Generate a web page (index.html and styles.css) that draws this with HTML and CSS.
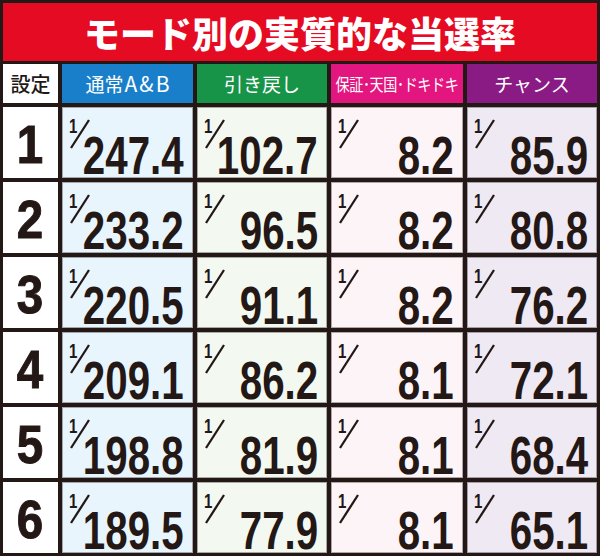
FILE: index.html
```html
<!DOCTYPE html>
<html lang="ja">
<head>
<meta charset="utf-8">
<link rel="stylesheet" href="styles.css">
</head>
<body>
<div class="board">
  <div class="title">モード別の実質的な当選率</div>
  <div class="grid">
    <div class="hd hd-set">設定</div>
    <div class="hd hd-a">通常<span class="wide">A&amp;B</span></div>
    <div class="hd hd-b">引き戻し</div>
    <div class="hd hd-c"><span class="squeeze">保証･天国･ドキドキ</span></div>
    <div class="hd hd-d">チャンス</div>

    <div class="set"><span class="sn">1</span></div>
    <div class="cell ca"><span class="frac"><span class="one">1</span><svg class="slash" viewBox="0 0 22 32"><line x1="2" y1="30" x2="20" y2="2"/></svg></span><span class="num"><span class="nt">247.4</span></span></div>
    <div class="cell cb"><span class="frac"><span class="one">1</span><svg class="slash" viewBox="0 0 22 32"><line x1="2" y1="30" x2="20" y2="2"/></svg></span><span class="num"><span class="nt">102.7</span></span></div>
    <div class="cell cc"><span class="frac"><span class="one">1</span><svg class="slash" viewBox="0 0 22 32"><line x1="2" y1="30" x2="20" y2="2"/></svg></span><span class="num"><span class="nt">8.2</span></span></div>
    <div class="cell cd"><span class="frac"><span class="one">1</span><svg class="slash" viewBox="0 0 22 32"><line x1="2" y1="30" x2="20" y2="2"/></svg></span><span class="num"><span class="nt">85.9</span></span></div>

    <div class="set"><span class="sn">2</span></div>
    <div class="cell ca"><span class="frac"><span class="one">1</span><svg class="slash" viewBox="0 0 22 32"><line x1="2" y1="30" x2="20" y2="2"/></svg></span><span class="num"><span class="nt">233.2</span></span></div>
    <div class="cell cb"><span class="frac"><span class="one">1</span><svg class="slash" viewBox="0 0 22 32"><line x1="2" y1="30" x2="20" y2="2"/></svg></span><span class="num"><span class="nt">96.5</span></span></div>
    <div class="cell cc"><span class="frac"><span class="one">1</span><svg class="slash" viewBox="0 0 22 32"><line x1="2" y1="30" x2="20" y2="2"/></svg></span><span class="num"><span class="nt">8.2</span></span></div>
    <div class="cell cd"><span class="frac"><span class="one">1</span><svg class="slash" viewBox="0 0 22 32"><line x1="2" y1="30" x2="20" y2="2"/></svg></span><span class="num"><span class="nt">80.8</span></span></div>

    <div class="set"><span class="sn">3</span></div>
    <div class="cell ca"><span class="frac"><span class="one">1</span><svg class="slash" viewBox="0 0 22 32"><line x1="2" y1="30" x2="20" y2="2"/></svg></span><span class="num"><span class="nt">220.5</span></span></div>
    <div class="cell cb"><span class="frac"><span class="one">1</span><svg class="slash" viewBox="0 0 22 32"><line x1="2" y1="30" x2="20" y2="2"/></svg></span><span class="num"><span class="nt">91.1</span></span></div>
    <div class="cell cc"><span class="frac"><span class="one">1</span><svg class="slash" viewBox="0 0 22 32"><line x1="2" y1="30" x2="20" y2="2"/></svg></span><span class="num"><span class="nt">8.2</span></span></div>
    <div class="cell cd"><span class="frac"><span class="one">1</span><svg class="slash" viewBox="0 0 22 32"><line x1="2" y1="30" x2="20" y2="2"/></svg></span><span class="num"><span class="nt">76.2</span></span></div>

    <div class="set"><span class="sn">4</span></div>
    <div class="cell ca"><span class="frac"><span class="one">1</span><svg class="slash" viewBox="0 0 22 32"><line x1="2" y1="30" x2="20" y2="2"/></svg></span><span class="num"><span class="nt">209.1</span></span></div>
    <div class="cell cb"><span class="frac"><span class="one">1</span><svg class="slash" viewBox="0 0 22 32"><line x1="2" y1="30" x2="20" y2="2"/></svg></span><span class="num"><span class="nt">86.2</span></span></div>
    <div class="cell cc"><span class="frac"><span class="one">1</span><svg class="slash" viewBox="0 0 22 32"><line x1="2" y1="30" x2="20" y2="2"/></svg></span><span class="num"><span class="nt">8.1</span></span></div>
    <div class="cell cd"><span class="frac"><span class="one">1</span><svg class="slash" viewBox="0 0 22 32"><line x1="2" y1="30" x2="20" y2="2"/></svg></span><span class="num"><span class="nt">72.1</span></span></div>

    <div class="set"><span class="sn">5</span></div>
    <div class="cell ca"><span class="frac"><span class="one">1</span><svg class="slash" viewBox="0 0 22 32"><line x1="2" y1="30" x2="20" y2="2"/></svg></span><span class="num"><span class="nt">198.8</span></span></div>
    <div class="cell cb"><span class="frac"><span class="one">1</span><svg class="slash" viewBox="0 0 22 32"><line x1="2" y1="30" x2="20" y2="2"/></svg></span><span class="num"><span class="nt">81.9</span></span></div>
    <div class="cell cc"><span class="frac"><span class="one">1</span><svg class="slash" viewBox="0 0 22 32"><line x1="2" y1="30" x2="20" y2="2"/></svg></span><span class="num"><span class="nt">8.1</span></span></div>
    <div class="cell cd"><span class="frac"><span class="one">1</span><svg class="slash" viewBox="0 0 22 32"><line x1="2" y1="30" x2="20" y2="2"/></svg></span><span class="num"><span class="nt">68.4</span></span></div>

    <div class="set"><span class="sn">6</span></div>
    <div class="cell ca"><span class="frac"><span class="one">1</span><svg class="slash" viewBox="0 0 22 32"><line x1="2" y1="30" x2="20" y2="2"/></svg></span><span class="num"><span class="nt">189.5</span></span></div>
    <div class="cell cb"><span class="frac"><span class="one">1</span><svg class="slash" viewBox="0 0 22 32"><line x1="2" y1="30" x2="20" y2="2"/></svg></span><span class="num"><span class="nt">77.9</span></span></div>
    <div class="cell cc"><span class="frac"><span class="one">1</span><svg class="slash" viewBox="0 0 22 32"><line x1="2" y1="30" x2="20" y2="2"/></svg></span><span class="num"><span class="nt">8.1</span></span></div>
    <div class="cell cd"><span class="frac"><span class="one">1</span><svg class="slash" viewBox="0 0 22 32"><line x1="2" y1="30" x2="20" y2="2"/></svg></span><span class="num"><span class="nt">65.1</span></span></div>
  </div>
</div>
</body>
</html>
```

FILE: styles.css
```css
html, body {
  margin: 0;
  padding: 0;
  background: #231815;
}

.board {
  width: 600px;
  height: 556px;
  box-sizing: border-box;
  padding: 3px;
  background: #231815;
  display: flex;
  flex-direction: column;
  gap: 3px;
  font-family: "Noto Sans CJK JP", "Liberation Sans", sans-serif;
  color: #231815;
}

.title {
  height: 58px;
  background: #e50b22;
  color: #fff;
  font-size: 36px;
  font-weight: 900;
  line-height: 58px;
  text-align: center;
}

.grid {
  display: grid;
  grid-template-columns: 55px 131px 130px 132px 130px;
  grid-template-rows: 39px repeat(6, 71px);
  gap: 4px;
}

.hd {
  display: flex;
  align-items: center;
  justify-content: center;
  color: #fff;
  font-size: 19px;
  font-weight: 400;
  line-height: 1;
  overflow: hidden;
}

.hd-set { background: #fff; color: #231815; font-weight: 500; font-size: 20px; }
.hd-a { background: #1a7fca; }
.hd-b { background: #179447; }
.hd-c { background: #e3157f; }
.hd-d { background: #8b1b84; }

.wide {
  font-size: 21px;
  letter-spacing: 2px;
  margin-left: 1px;
  margin-right: -2px;
}

.squeeze {
  display: inline-block;
  font-size: 17px;
  transform: scaleX(0.83);
  white-space: nowrap;
  letter-spacing: -0.5px;
}

.set {
  background: #fff;
  display: flex;
  align-items: center;
  justify-content: center;
  padding-top: 3px;
}

.sn {
  display: inline-block;
  font-family: "Liberation Sans", sans-serif;
  font-weight: 700;
  font-size: 54px;
  line-height: 1;
  -webkit-text-stroke: 1px #231815;
  transform: scaleX(0.88);
}

.cell {
  display: flex;
  box-sizing: border-box;
  padding: 11px 9px 2px 6px;
  box-shadow: inset 0 0 0 1px rgba(35, 24, 21, 0.35);
  min-width: 0;
}

.ca { background: #e9f5fd; }
.cb { background: #f3f9f1; }
.cc { background: #fdf4f8; }
.cd { background: #efe9f4; }

.frac {
  position: relative;
  flex: none;
  width: 22px;
  height: 32px;
  align-self: flex-start;
}

.one {
  position: absolute;
  left: 1px;
  top: -2px;
  font-family: "Liberation Sans", sans-serif;
  font-weight: 700;
  font-size: 20px;
  line-height: 20px;
  display: inline-block;
  transform: scaleX(0.75);
  transform-origin: left;
}

.slash {
  position: absolute;
  left: 1px;
  top: 0;
  width: 22px;
  height: 32px;
  overflow: visible;
}

.slash line {
  stroke: #231815;
  stroke-width: 2.3;
}

.num {
  flex: 1 1 0;
  min-width: 0;
  display: flex;
  justify-content: flex-end;
  align-self: flex-end;
  height: 40px;
  line-height: 40px;
}

.nt {
  display: inline-block;
  flex: none;
  font-family: "Liberation Sans", sans-serif;
  font-weight: 700;
  font-size: 53px;
  transform: scaleX(0.76);
  transform-origin: right;
  white-space: nowrap;
}
```
